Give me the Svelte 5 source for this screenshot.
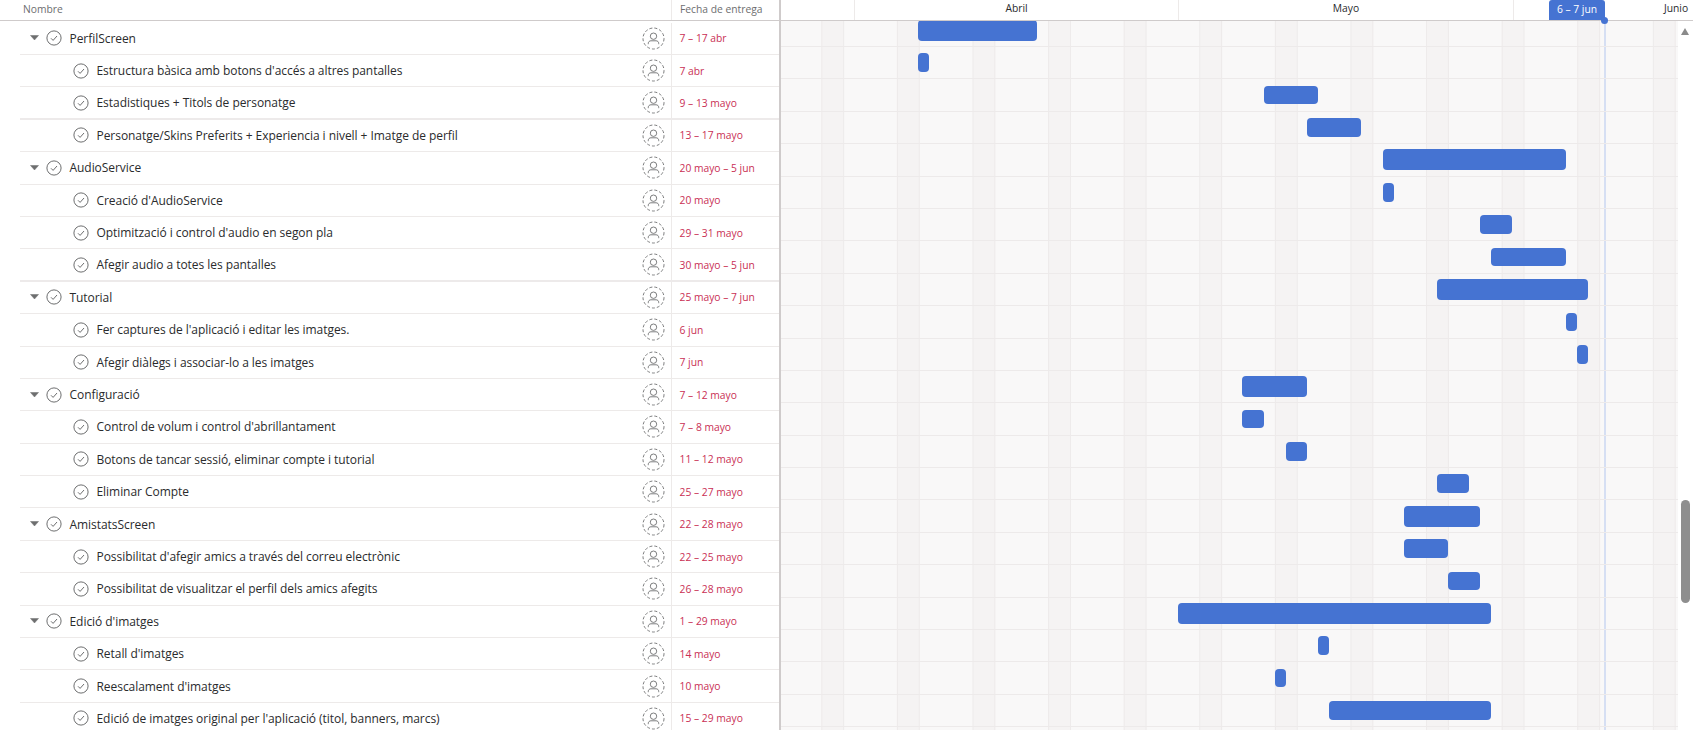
<script>
  const dayWidth = 10.8;

  const tasks = [
    {name: 'PerfilScreen', date: '7 – 17 abr', from: 0, to: 11, parent: true},
    {name: "Estructura bàsica amb botons d'accés a altres pantalles", date: '7 abr', from: 0, to: 1},
    {name: 'Estadistiques + Titols de personatge', date: '9 – 13 mayo', from: 32, to: 37, heavy: true},
    {name: 'Personatge/Skins Preferits + Experiencia i nivell + Imatge de perfil', date: '13 – 17 mayo', from: 36, to: 41},
    {name: 'AudioService', date: '20 mayo – 5 jun', from: 43, to: 60, parent: true},
    {name: "Creació d'AudioService", date: '20 mayo', from: 43, to: 44},
    {name: "Optimització i control d'audio en segon pla", date: '29 – 31 mayo', from: 52, to: 55},
    {name: 'Afegir audio a totes les pantalles', date: '30 mayo – 5 jun', from: 53, to: 60, heavy: true},
    {name: 'Tutorial', date: '25 mayo – 7 jun', from: 48, to: 62, parent: true},
    {name: "Fer captures de l'aplicació i editar les imatges.", date: '6 jun', from: 60, to: 61},
    {name: 'Afegir diàlegs i associar-lo a les imatges', date: '7 jun', from: 61, to: 62},
    {name: 'Configuració', date: '7 – 12 mayo', from: 30, to: 36, parent: true},
    {name: "Control de volum i control d'abrillantament", date: '7 – 8 mayo', from: 30, to: 32},
    {name: 'Botons de tancar sessió, eliminar compte i tutorial', date: '11 – 12 mayo', from: 34, to: 36},
    {name: 'Eliminar Compte', date: '25 – 27 mayo', from: 48, to: 51},
    {name: 'AmistatsScreen', date: '22 – 28 mayo', from: 45, to: 52, parent: true},
    {name: "Possibilitat d'afegir amics a través del correu electrònic", date: '22 – 25 mayo', from: 45, to: 49},
    {name: 'Possibilitat de visualitzar el perfil dels amics afegits', date: '26 – 28 mayo', from: 49, to: 52},
    {name: "Edició d'imatges", date: '1 – 29 mayo', from: 24, to: 53, parent: true},
    {name: "Retall d'imatges", date: '14 mayo', from: 37, to: 38},
    {name: "Reescalament d'imatges", date: '10 mayo', from: 33, to: 34},
    {name: "Edició de imatges original per l'aplicació (titol, banners, marcs)", date: '15 – 29 mayo', from: 38, to: 53}
  ];
</script>

<div class="page">
  <header class="head">
    <div class="head-list">
      <span class="head-name">Nombre</span>
      <span class="head-date">Fecha de entrega</span>
    </div>
    <div class="months">
      <span class="month abril">Abril</span>
      <span class="month mayo">Mayo</span>
      <span class="month junio">Junio</span>
      <span class="tag">6 – 7 jun</span>
      <span class="dot"></span>
    </div>
  </header>

  <div class="body">
    <div class="list">
      {#each tasks as task}
        <div class="row" class:heavy={task.heavy}>
          <div class="name" class:parent={task.parent}>
            {#if task.parent}
              <svg class="caret" width="9" height="6" viewBox="0 0 9 6"><path d="M.5 .5h8L4.5 5z" fill="#6d6e6f" stroke="#6d6e6f" stroke-width="0.5" stroke-linejoin="round"/></svg>
            {/if}
            <svg class="check" width="16" height="16" viewBox="0 0 16 16" fill="none" stroke="#6d6e6f">
              <circle cx="8" cy="8" r="7.1" stroke-width="1"/>
              <path d="M5 8.3l2.1 2.1L11 6" stroke-width="1"/>
            </svg>
            <span>{task.name}</span>
          </div>
          <svg class="who" width="23" height="23" viewBox="0 0 23 23" fill="none" stroke="#6d6e6f" stroke-width="0.9">
            <circle cx="11.5" cy="11.5" r="10.5" stroke-dasharray="3 2"/>
            <circle cx="11.5" cy="9.2" r="3.2"/>
            <path d="M6.3 17.2v-.9c0-1.5 1.2-2.5 2.6-2.5h5.2c1.4 0 2.6 1 2.6 2.5v.9"/>
          </svg>
          <div class="date">{task.date}</div>
        </div>
      {/each}
    </div>

    <div class="gantt">
      <div class="today"></div>
      <div class="lanes">
        {#each tasks as task}
          <div class="lane">
            <div class="bar" class:parent={task.parent} style="margin-left: {137.4 + task.from * dayWidth}px; width: {(task.to - task.from) * dayWidth}px"></div>
          </div>
        {/each}
      </div>
    </div>

    <div class="scroll">
      <span class="arrow"></span>
      <span class="thumb"></span>
    </div>
  </div>
</div>

<style>
  :global(body) {
    margin: 0;
    background: #fff;
  }

  .page {
    display: flex;
    flex-direction: column;
    height: 730px;
    overflow: hidden;
    font-family: "Open Sans", "Noto Sans", sans-serif;
    color: #2a2b2d;
  }

  .head {
    display: flex;
    flex: none;
    height: 20px;
    border-bottom: 1.5px solid #cfcbcb;
    font-size: 10.3px;
  }

  .head-list {
    display: flex;
    flex: none;
    width: 779px;
    height: 20px;
    color: #6d6e6f;
    line-height: 19px;
    border-right: 2px solid #cfcbcb;
  }

  .head-name {
    flex: 1;
    padding-left: 23px;
  }

  .head-date {
    width: 99px;
    padding-left: 8px;
    border-left: 1px solid #edeae9;
  }

  .months {
    display: flex;
    position: relative;
    flex: 1;
    min-width: 0;
    padding-left: 73px;
    line-height: 17px;
  }

  .month {
    flex: none;
    height: 20px;
    text-align: center;
    border-left: 1px solid #edeae9;
  }

  .abril { width: 323px; }
  .mayo { width: 334px; }
  .junio { width: 324px; }

  .tag {
    position: absolute;
    left: 768px;
    top: 0;
    width: 56px;
    height: 20px;
    color: #fff;
    text-align: center;
    line-height: 19px;
    background: #4573d2;
    border-top-left-radius: 3px;
    border-top-right-radius: 3px;
  }

  .dot {
    position: absolute;
    z-index: 1;
    left: 820px;
    top: 17px;
    width: 7px;
    height: 7px;
    background: #4573d2;
    border-radius: 50%;
  }

  .body {
    display: flex;
    flex: 1;
    min-height: 0;
  }

  .list {
    flex: none;
    width: 759px;
    padding: 1.6px 0 0 20px;
    border-right: 2px solid #cfcbcb;
  }

  .row {
    display: flex;
    align-items: center;
    box-sizing: border-box;
    height: 32.4px;
    border-bottom: 1px solid #edeae9;
  }

  .row.heavy {
    border-bottom: 2px solid #edeaea;
  }

  .name {
    display: flex;
    flex: 1;
    align-items: center;
    min-width: 0;
    padding-left: 53px;
    font-size: 12px;
    letter-spacing: -0.05px;
    white-space: nowrap;
  }

  .name.parent {
    padding-left: 10px;
  }

  .caret {
    margin-right: 7px;
  }

  .check {
    flex: none;
    margin-right: 7.5px;
  }

  .who {
    flex: none;
    margin-right: 6px;
  }

  .date {
    display: flex;
    align-items: center;
    flex: none;
    box-sizing: border-box;
    width: 108px;
    height: 100%;
    padding-left: 7.5px;
    color: #c92f54;
    font-size: 10.3px;
    border-left: 1px solid #edeae9;
  }

  .gantt {
    position: relative;
    flex: none;
    width: 897px;
    overflow: hidden;
    background-color: #f9f8f8;
    background-image: linear-gradient(90deg, #edeaea 0 1px, #f5f3f3 1px 21.6px, #edeaea 21.6px 22.6px, transparent 22.6px);
    background-size: 75.6px 100%;
    background-position: 40.3px 0;
  }

  .today {
    position: absolute;
    left: 823px;
    top: 0;
    bottom: 0;
    width: 2px;
    background: #d6dff3;
  }

  .lanes {
    margin-top: -6.4px;
  }

  .lane {
    position: relative;
    box-sizing: border-box;
    height: 32.4px;
    padding-top: 6.4px;
    border-bottom: 1px solid #edeaea;
  }

  .bar {
    height: 18.6px;
    background: #4573d2;
    border-radius: 4px;
  }

  .bar.parent {
    height: 21px;
    margin-top: -1.2px;
  }

  .scroll {
    position: relative;
    flex: 1;
  }

  .arrow {
    position: absolute;
    left: 3px;
    top: 7px;
    border: 4.5px solid transparent;
    border-top: 0;
    border-bottom: 7px solid #8a8a8a;
  }

  .thumb {
    position: absolute;
    left: 3px;
    top: 479px;
    width: 9px;
    height: 103px;
    background: #8e8e8e;
    border-radius: 5px;
  }
</style>
